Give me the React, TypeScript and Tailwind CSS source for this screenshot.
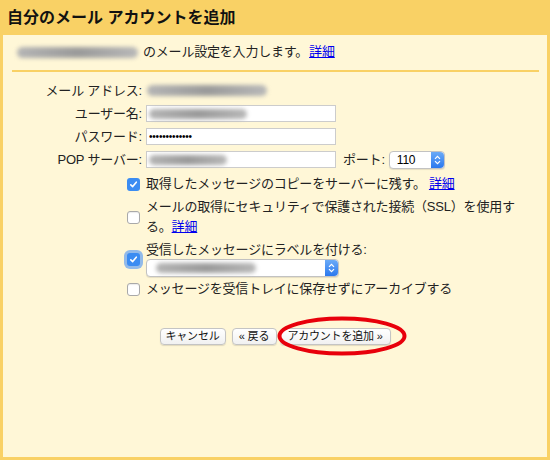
import React from "react";

const font = { fontFamily: '"Liberation Sans", "Noto Sans CJK JP", sans-serif' };

function Blur({ className }: { className: string }) {
  return (
    <span
      className={`inline-block rounded-full bg-gradient-to-r from-[#b5b5b5] via-[#9a9a9a] to-[#b8b8b8] blur-[2px] ${className}`}
    />
  );
}

function Check({ checked, focused }: { checked?: boolean; focused?: boolean }) {
  if (!checked) {
    return (
      <span className="w-[13px] h-[13px] shrink-0 rounded-[3px] border border-[#a9a9a9] bg-white shadow-[inset_0_1px_1px_rgba(0,0,0,0.08)]" />
    );
  }
  return (
    <span
      className={`w-[13px] h-[13px] shrink-0 rounded-[3px] bg-[#3b8cf2] flex items-center justify-center ${
        focused ? "shadow-[0_0_0_3px_rgba(110,165,240,0.75)]" : ""
      }`}
    >
      <svg width="9" height="9" viewBox="0 0 9 9">
        <path d="M1.8 4.8 L3.7 6.6 L7.3 2.2" fill="none" stroke="white" strokeWidth="1.6" strokeLinecap="round" strokeLinejoin="round" />
      </svg>
    </span>
  );
}

function SelectArrow() {
  return (
    <span className="w-[13px] self-stretch rounded-r-[4px] bg-gradient-to-b from-[#6aaaf7] to-[#2a78ee] flex items-center justify-center">
      <svg width="7" height="10" viewBox="0 0 7 10">
        <path d="M1 3.8 L3.5 1.3 L6 3.8 M1 6.2 L3.5 8.7 L6 6.2" fill="none" stroke="white" strokeWidth="1.2" />
      </svg>
    </span>
  );
}

function Button({ children, className }: { children: React.ReactNode; className: string }) {
  return (
    <span
      className={`h-[17px] flex items-center justify-center rounded-[4px] border border-[#c4c4c4] bg-gradient-to-b from-white to-[#f1f1f1] text-[11px] text-[#111] shadow-[0_1px_1px_rgba(0,0,0,0.12)] ${className}`}
    >
      {children}
    </span>
  );
}

export default function App() {
  return (
    <div className="w-[550px] h-[460px] bg-[#f9d165] flex flex-col text-[#222]" style={font}>
      <div className="h-[35px] pl-[7px] flex items-center text-[16px] font-bold text-[#111]">
        自分のメール アカウントを追加
      </div>
      <div className="flex-1 ml-[3px] mr-[3px] mb-[3px] bg-[#fff7d7] flex flex-col text-[13px] tracking-[-0.2px]">
        <div className="mt-[8px] h-[18px] pl-[14px] flex items-center">
          <Blur className="w-[121px] h-[11px]" />
          <span className="ml-[5px]">のメール設定を入力します。</span>
          <a className="ml-[1px] text-[#0000ee] underline">詳細</a>
        </div>
        <div className="mt-[9px] ml-[9px] mr-[8px] h-[2px] bg-[#f9d165]" />

        <div className="mt-[7px] flex flex-col">
          <div className="h-[23px] flex items-center">
            <span className="w-[139px] text-right">メール アドレス:</span>
            <span className="ml-[4px] pl-[1px] flex items-center">
              <Blur className="w-[120px] h-[11px]" />
            </span>
          </div>
          <div className="h-[23px] flex items-center">
            <span className="w-[139px] text-right">ユーザー名:</span>
            <span className="ml-[4px] w-[190px] h-[17px] bg-white border border-[#cccccc] flex items-center pl-[2px]">
              <Blur className="w-[98px] h-[10px]" />
            </span>
          </div>
          <div className="h-[23px] flex items-center">
            <span className="w-[139px] text-right">パスワード:</span>
            <span className="ml-[4px] w-[190px] h-[17px] bg-white border border-[#cccccc] flex items-center pl-[2px] text-[10px] leading-none tracking-[-0.2px] text-black">
              •••••••••••••
            </span>
          </div>
          <div className="h-[23px] flex items-center">
            <span className="w-[139px] text-right">POP サーバー:</span>
            <span className="ml-[4px] w-[190px] h-[17px] bg-white border border-[#cccccc] flex items-center pl-[2px]">
              <Blur className="w-[78px] h-[10px]" />
            </span>
            <span className="ml-[7px]">ポート:</span>
            <span className="ml-[4px] w-[56px] h-[18px] rounded-[4px] border border-[#c2c2c2] bg-white flex items-center shadow-[0_1px_1px_rgba(0,0,0,0.1)]">
              <span className="flex-1 pl-[7px] text-[12px] text-black">110</span>
              <SelectArrow />
            </span>
          </div>
        </div>

        <div className="mt-[3px] pl-[124px] flex flex-col">
          <div className="h-[20px] flex items-center">
            <Check checked />
            <span className="ml-[6px]">
              取得したメッセージのコピーをサーバーに残す。<a className="ml-[3px] text-[#0000ee] underline">詳細</a>
            </span>
          </div>
          <div className="mt-[3px] flex items-center">
            <Check />
            <span className="ml-[6px] leading-[20px]">
              メールの取得にセキュリティで保護された接続（SSL）を使用す
              <br />
              る。<a className="text-[#0000ee] underline">詳細</a>
            </span>
          </div>
          <div className="mt-[4px] flex items-center">
            <Check checked focused />
            <span className="ml-[6px] flex flex-col">
              <span className="leading-[18px]">受信したメッセージにラベルを付ける:</span>
              <span className="w-[193px] h-[18px] rounded-[4px] border border-[#c2c2c2] bg-white flex items-center shadow-[0_1px_1px_rgba(0,0,0,0.1)]">
                <span className="flex-1 pl-[9px] flex items-center">
                  <Blur className="w-[100px] h-[10px]" />
                </span>
                <SelectArrow />
              </span>
            </span>
          </div>
          <div className="mt-[2px] h-[20px] flex items-center">
            <Check />
            <span className="ml-[6px]">メッセージを受信トレイに保存せずにアーカイブする</span>
          </div>
        </div>

        <div className="mt-[29px] flex justify-center">
          <Button className="w-[66px]">キャンセル</Button>
          <Button className="ml-[6px] w-[45px]">« 戻る</Button>
          <span className="relative ml-[3px]">
            <Button className="w-[111px]">アカウントを追加 »</Button>
            <svg
              className="absolute left-[-3px] top-[-12px] pointer-events-none"
              width="130"
              height="40"
              viewBox="0 0 130 40"
            >
              <ellipse cx="65" cy="20" rx="62.5" ry="17.5" fill="none" stroke="#e8000b" strokeWidth="4" />
            </svg>
          </span>
        </div>
      </div>
    </div>
  );
}
